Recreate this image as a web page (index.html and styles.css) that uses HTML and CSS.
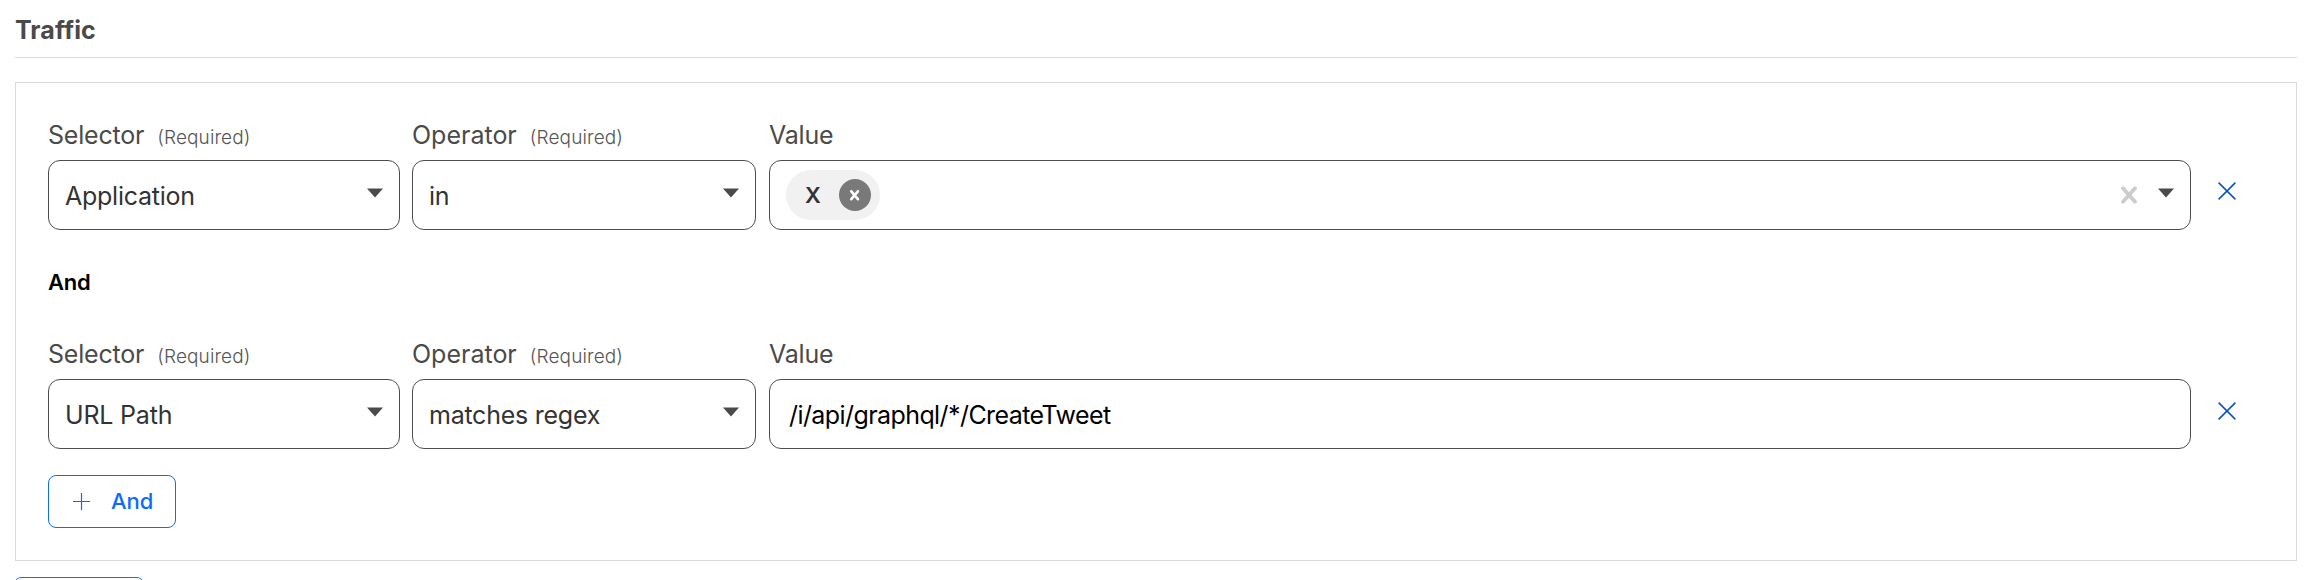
FILE: index.html
```html
<!DOCTYPE html>
<html lang="en">
<head>
<meta charset="utf-8">
<title>Traffic</title>
<link rel="stylesheet" href="styles.css">
</head>
<body>
<h2 class="title"><span>Traffic</span></h2>
<section class="panel">
  <div class="rule">
    <div class="field">
      <div class="label"><span class="name name-selector">Selector</span><span class="required">(Required)</span></div>
      <div class="control"><span class="text t-application">Application</span><svg class="caret" width="16" height="10" viewBox="0 0 16 10"><path d="M0 .5h16L8 9.5z"/></svg></div>
    </div>
    <div class="field">
      <div class="label"><span class="name name-operator">Operator</span><span class="required">(Required)</span></div>
      <div class="control"><span class="text t-in">in</span><svg class="caret" width="16" height="10" viewBox="0 0 16 10"><path d="M0 .5h16L8 9.5z"/></svg></div>
    </div>
    <div class="field">
      <div class="label"><span class="name name-value">Value</span></div>
      <div class="control multi">
        <span class="chip"><span class="chip-text">X</span><svg width="32" height="32" viewBox="0 0 32 32"><circle cx="16" cy="16" r="16" fill="#797979"/><path d="M12.3 12.3l6.6 7.8M18.9 12.3l-6.6 7.8" stroke="#fff" stroke-width="2.7" stroke-linecap="round"/></svg></span>
        <svg class="clear" width="16" height="18" viewBox="0 0 16 18"><path d="M2 2.3l12 13.4M14 2.3L2 15.7" stroke="#ccc" stroke-width="3.8" stroke-linecap="round"/></svg>
        <svg class="caret" width="16" height="10" viewBox="0 0 16 10"><path d="M0 .5h16L8 9.5z"/></svg>
      </div>
    </div>
    <svg class="remove" width="18" height="18" viewBox="0 0 18 18"><path d="M.6.6l16.8 16.8M17.4.6L.6 17.4"/></svg>
  </div>
  <div class="joiner"><span>And</span></div>
  <div class="rule">
    <div class="field">
      <div class="label"><span class="name name-selector">Selector</span><span class="required">(Required)</span></div>
      <div class="control"><span class="text t-url">URL Path</span><svg class="caret" width="16" height="10" viewBox="0 0 16 10"><path d="M0 .5h16L8 9.5z"/></svg></div>
    </div>
    <div class="field">
      <div class="label"><span class="name name-operator">Operator</span><span class="required">(Required)</span></div>
      <div class="control"><span class="text t-regex">matches regex</span><svg class="caret" width="16" height="10" viewBox="0 0 16 10"><path d="M0 .5h16L8 9.5z"/></svg></div>
    </div>
    <div class="field">
      <div class="label"><span class="name name-value">Value</span></div>
      <div class="control input"><span class="text t-path">/i/api/graphql/*/CreateTweet</span></div>
    </div>
    <svg class="remove remove-last" width="18" height="18" viewBox="0 0 18 18"><path d="M.6.6l16.8 16.8M17.4.6L.6 17.4"/></svg>
  </div>
  <div class="button"><svg width="18" height="18" viewBox="0 0 18 18"><path d="M0 9.5h17M8.5 1v17" stroke="#0f6bff" stroke-width="1.2"/></svg><span>And</span></div>
</section>
<div class="button next"></div>
</body>
</html>
```
FILE: styles.css
```css
* { box-sizing: border-box; }
html { overflow: hidden; background: #fff; }
body { margin: 0; padding: 0 13px 0 15px; height: 580px; overflow: hidden; font-family: Inter, "Liberation Sans", sans-serif; }
svg { display: block; flex: none; fill: none; }
.title { margin: 0 0 24px; height: 58px; padding-top: 15px; border-bottom: 1px solid #d9d9d9; color: #4a4a4a; font-size: 25px; line-height: 30px; font-weight: 700; letter-spacing: .1px; }
.panel { height: 479px; border: 1px solid #d9d9d9; padding: 37px 32px 0; }
.rule { display: grid; grid-template-columns: 352px 344px 1422px 18px; column-gap: 12px; height: 110px; }
.rule .field:nth-child(3) { margin-left: 1px; margin-right: -1px; }
.label { display: flex; align-items: baseline; height: 30px; margin-bottom: 10px; line-height: 30px; color: #4a4a4a; font-size: 25px; white-space: nowrap; }
.name-selector { letter-spacing: -.2px; }
.name-value { letter-spacing: -.2px; }
.required { margin-left: 13px; font-size: 19px; font-weight: 300; letter-spacing: .12px; color: #555; }
.control { display: flex; align-items: center; justify-content: space-between; height: 70px; padding: 0 16px; border: 1px solid #4d4d4d; border-radius: 12px; color: #333; font-size: 25px; line-height: 30px; white-space: nowrap; }
.control .text { padding-top: 2px; letter-spacing: -.25px; }
.control .t-url { letter-spacing: -.2px; }
.control .t-path { letter-spacing: -.58px; }
.caret { fill: #4a4a4a; margin-bottom: 4px; }
.input { padding-left: 19px; color: #000; }
.chip { display: flex; align-items: center; justify-content: space-between; width: 94px; height: 50px; padding: 0 9px 0 20px; border-radius: 25px; background: #f1f1f1; font-size: 22px; font-weight: 600; }
.chip-text { margin-left: -1px; }
.clear { margin-left: auto; margin-right: 21px; }
.remove { margin: 62px 0 0 16px; stroke: #0b4fc2; stroke-width: 1.5; }
.remove-last { margin-top: 63px; }
.joiner { height: 109px; padding-top: 37px; font-size: 22px; line-height: 30px; font-weight: 600; letter-spacing: -.2px; }
.button { display: flex; align-items: center; width: 128px; height: 53px; margin-top: 26px; padding: 0 0 2px 24px; gap: 20px; border: 1px solid #0f6bff; border-radius: 8px; color: #0f6bff; font-size: 22px; font-weight: 500; }
.next { width: 126px; height: 3px; margin: 16px 0 0 1px; padding: 0; border-bottom: 0; border-radius: 6px 6px 0 0 / 3px 3px 0 0; }
```
